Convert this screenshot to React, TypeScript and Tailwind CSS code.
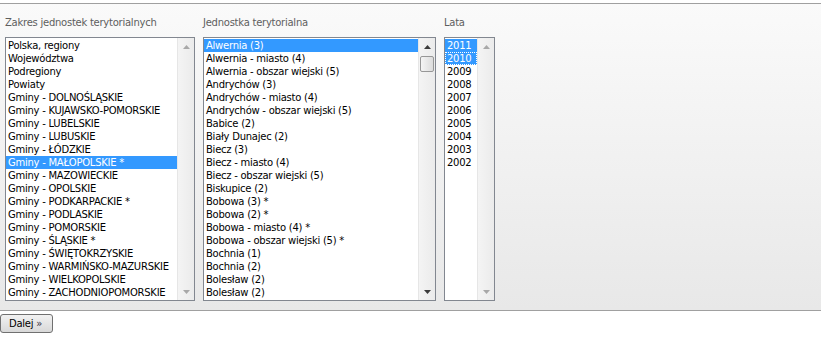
import React from 'react';

const zakresy = [
  'Polska, regiony',
  'Województwa',
  'Podregiony',
  'Powiaty',
  'Gminy - DOLNOŚLĄSKIE',
  'Gminy - KUJAWSKO-POMORSKIE',
  'Gminy - LUBELSKIE',
  'Gminy - LUBUSKIE',
  'Gminy - ŁÓDZKIE',
  'Gminy - MAŁOPOLSKIE *',
  'Gminy - MAZOWIECKIE',
  'Gminy - OPOLSKIE',
  'Gminy - PODKARPACKIE *',
  'Gminy - PODLASKIE',
  'Gminy - POMORSKIE',
  'Gminy - ŚLĄSKIE *',
  'Gminy - ŚWIĘTOKRZYSKIE',
  'Gminy - WARMIŃSKO-MAZURSKIE',
  'Gminy - WIELKOPOLSKIE',
  'Gminy - ZACHODNIOPOMORSKIE',
];

const jednostki = [
  'Alwernia (3)',
  'Alwernia - miasto (4)',
  'Alwernia - obszar wiejski (5)',
  'Andrychów (3)',
  'Andrychów - miasto (4)',
  'Andrychów - obszar wiejski (5)',
  'Babice (2)',
  'Biały Dunajec (2)',
  'Biecz (3)',
  'Biecz - miasto (4)',
  'Biecz - obszar wiejski (5)',
  'Biskupice (2)',
  'Bobowa (3) *',
  'Bobowa (2) *',
  'Bobowa - miasto (4) *',
  'Bobowa - obszar wiejski (5) *',
  'Bochnia (1)',
  'Bochnia (2)',
  'Bolesław (2)',
  'Bolesław (2)',
];

const lata = ['2011', '2010', '2009', '2008', '2007', '2006', '2005', '2004', '2003', '2002'];

type ListProps = {
  items: string[];
  selected: number[];
  focused?: number;
  width: string;
  active?: boolean;
};

function Arrow({ up, active }: { up: boolean; active?: boolean }) {
  return (
    <svg width="7" height="4" viewBox="0 0 7 4" className="block">
      <polygon
        points={up ? '3.5,0 7,4 0,4' : '0,0 7,0 3.5,4'}
        fill={active ? '#3c3c3c' : '#a8a8a8'}
      />
    </svg>
  );
}

function ListBox({ items, selected, focused, width, active }: ListProps) {
  return (
    <div className={`flex h-[264px] border border-[#828790] bg-white ${width}`}>
      <div className="flex-1 overflow-hidden pt-px">
        {items.map((item, i) => {
          const isSel = selected.includes(i);
          return (
            <div
              key={i}
              className={`h-[13px] pl-[2px] leading-[13px] whitespace-nowrap ${
                isSel ? 'bg-[#3399ff] text-white' : 'text-black'
              } ${focused === i ? 'outline outline-1 outline-dotted outline-white -outline-offset-1' : ''}`}
            >
              {item}
            </div>
          );
        })}
      </div>
      <div className="flex w-[17px] flex-col items-center border-l border-[#e6e6e6] bg-gradient-to-r from-[#f4f4f4] to-[#ebebeb]">
        <div className="flex h-[17px] items-center justify-center pt-px">
          <Arrow up active={active} />
        </div>
        {active && (
          <div className="mt-[1px] h-[16px] w-[14px] rounded-[2px] border border-[#979797] bg-gradient-to-r from-[#f5f5f5] to-[#dcdcdc]" />
        )}
        <div className="flex-1" />
        <div className="flex h-[17px] items-center justify-center">
          <Arrow up={false} active={active} />
        </div>
      </div>
    </div>
  );
}

export default function App() {
  return (
    <div className="h-[356px] w-[821px] bg-white pt-[3px] font-['DejaVu_Sans',Verdana,sans-serif] text-[10px] tracking-[-0.25px]">
      <div className="h-[308px] border-y border-[#a0a0a0] bg-gradient-to-b from-[#fafafa] to-[#e8e8e8] pl-[5px] pt-[12px]">
        <div className="flex gap-[8px]">
          <div className="w-[190px]">
            <div className="mb-[8px] h-[13px] leading-[13px] text-[#5e5e5e]">Zakres jednostek terytorialnych</div>
            <ListBox items={zakresy} selected={[9]} width="w-[190px]" />
          </div>
          <div className="w-[233px]">
            <div className="mb-[8px] h-[13px] leading-[13px] text-[#5e5e5e]">Jednostka terytorialna</div>
            <ListBox items={jednostki} selected={[0]} width="w-[233px]" active />
          </div>
          <div className="w-[51px]">
            <div className="mb-[8px] h-[13px] leading-[13px] text-[#5e5e5e]">Lata</div>
            <ListBox items={lata} selected={[0, 1]} focused={1} width="w-[51px]" />
          </div>
        </div>
      </div>
      <div className="pt-[3px]">
        <button
          type="button"
          className="h-[19px] w-[53px] rounded-[3px] border border-[#707070] bg-gradient-to-b from-[#f2f2f2] to-[#d8d8d8] pl-[1px] text-left text-black"
        >
          <span className="pl-[7px]">Dalej <span className="text-[#334]">»</span></span>
        </button>
      </div>
    </div>
  );
}
